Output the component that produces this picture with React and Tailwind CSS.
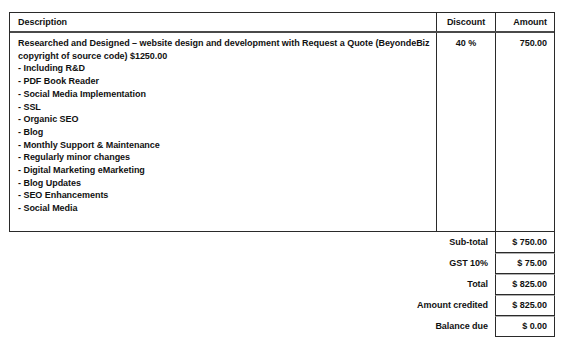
import React from 'react';

const items = [
  'Including R&D',
  'PDF Book Reader',
  'Social Media Implementation',
  'SSL',
  'Organic SEO',
  'Blog',
  'Monthly Support & Maintenance',
  'Regularly minor changes',
  'Digital Marketing eMarketing',
  'Blog Updates',
  'SEO Enhancements',
  'Social Media',
];

const totals = [
  { label: 'Sub-total', value: '$ 750.00' },
  { label: 'GST 10%', value: '$ 75.00' },
  { label: 'Total', value: '$ 825.00' },
  { label: 'Amount credited', value: '$ 825.00' },
  { label: 'Balance due', value: '$ 0.00' },
];

const App = () => {
  return (
    <div className="w-[562px] h-[346px] bg-white pt-[12px] pl-[9px] font-['Liberation_Sans',Arial,sans-serif] text-[9px] tracking-[-0.04px] font-bold text-[#111] leading-[12.7px]">
      <div className="w-[546px]">
        {/* Items table */}
        <div className="border border-[#2a2a2a]">
          <div className="flex h-[20px] border-b-2 border-[#4a4a4a] items-center">
            <div className="w-[426px] px-2 h-full flex items-center">Description</div>
            <div className="w-[59px] h-full border-l border-[#2a2a2a] flex items-center justify-center">Discount</div>
            <div className="w-[59px] h-full border-l border-[#2a2a2a] flex items-center justify-end pr-[7px]">Amount</div>
          </div>
          <div className="flex h-[198px]">
            <div className="w-[426px] px-2 pt-[4px]">
              <div className="whitespace-nowrap">
                Researched and Designed – website design and development with Request a Quote (BeyondeBiz
                <br />
                copyright of source code) $1250.00
              </div>
              {items.map((item) => (
                <div key={item}>- {item}</div>
              ))}
            </div>
            <div className="w-[59px] border-l border-[#2a2a2a] pt-[4px] text-center">40 %</div>
            <div className="w-[59px] border-l border-[#2a2a2a] pt-[4px] text-right pr-[7px]">750.00</div>
          </div>
        </div>

        {/* Totals */}
        <div className="flex flex-col">
          {totals.map((row, i) => (
            <div key={row.label} className="flex justify-end h-[21px]">
              <div className="flex items-center pr-[7px]">{row.label}</div>
              <div
                className={`w-[60px] flex items-center justify-end pr-[7px] border-x border-b border-b-[#2a2a2a] border-x-[#2a2a2a] ${
                  i === 0 ? '' : 'border-t border-t-[#b0b0b0]'
                }`}
              >
                {row.value}
              </div>
            </div>
          ))}
        </div>
      </div>
    </div>
  );
};

export default App;
